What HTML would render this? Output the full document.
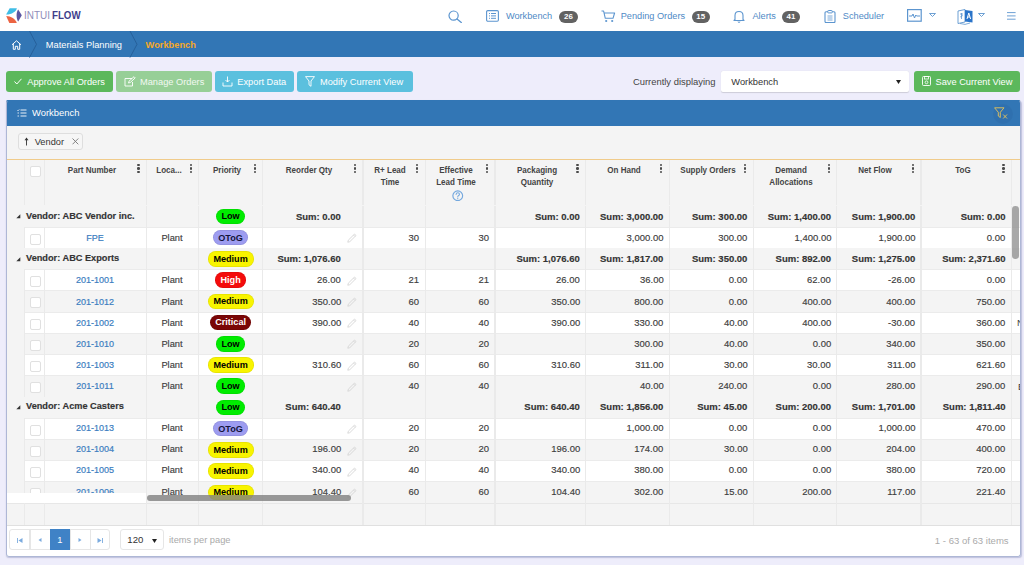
<!DOCTYPE html><html><head><meta charset="utf-8"><style>
*{margin:0;padding:0;box-sizing:border-box}
html,body{width:1024px;height:565px;overflow:hidden;background:#eeedfb;font-family:"Liberation Sans", sans-serif;color:#333}
.ab{position:absolute}
.t{position:absolute;white-space:nowrap;line-height:1}
.btn{position:absolute;border-radius:3px}
.badge{position:absolute;background:#626262;border-radius:6.5px;height:12.8px}
.cl{position:absolute;width:1.4px;background:#eaeaea}
.pill{position:absolute;height:15.6px;border-radius:7.8px;box-shadow:inset 0 0 0 0.7px rgba(0,0,0,0.08)}
.cb{position:absolute;width:11px;height:11px;border:1px solid #e0e0e0;border-radius:2px;background:#fff}
.keb{position:absolute;width:2.4px;}
.keb i{position:absolute;left:0;width:2.4px;height:2.4px;border-radius:50%;background:#4a4a4a}
</style></head><body>

<div class="ab" style="left:0;top:0;width:1024px;height:31px;background:#fff"></div>
<svg class="ab" style="left:0;top:0" width="30" height="31" viewBox="0 0 30 31">
<path d="M6.1 14.6 L9.7 8.2 L16.9 8.2 C16 11.6 12 14.3 6.1 14.6 Z" fill="#3fbde6"/>
<path d="M6.2 16.0 C11 16.2 15.5 19 16.8 22.9 L9.3 22.9 Z" fill="#ec6443"/>
<path d="M18.2 9.4 L21.8 15.3 L18.2 21.5 C16.2 19 15.9 12 18.2 9.4 Z" fill="#5a56a2"/>
</svg>
<div class="t" style="top:10.48px;font-size:11.3px;color:#8f8db9;left:24.10px;transform:scaleX(0.88);transform-origin:0 0;">INTUI</div>
<div class="t" style="top:10.48px;font-size:11.3px;color:#403e8c;font-weight:bold;left:52.10px;transform:scaleX(0.86);transform-origin:0 0;">FLOW</div>
<svg class="ab" style="left:448px;top:9.5px" width="15" height="13" viewBox="0 0 15 13"><circle cx="5.6" cy="5.6" r="4.6" fill="none" stroke="#5c95cf" stroke-width="1.2"/><path d="M9 9 L13.3 12.5" stroke="#5c95cf" stroke-width="1.3" stroke-linecap="round"/></svg>
<svg class="ab" style="left:486px;top:10.3px" width="13" height="12" viewBox="0 0 13 12"><rect x="0.6" y="0.6" width="11.8" height="10.6" rx="1.2" fill="none" stroke="#5c95cf" stroke-width="1.1"/><path d="M3 3.5h1M3 5.9h1M3 8.3h1M5 3.5h5M5 5.9h5M5 8.3h5" stroke="#5c95cf" stroke-width="1"/></svg>
<div class="t" style="top:12.01px;font-size:9.2px;color:#4f8ac6;left:505.90px;">Workbench</div>
<div class="badge" style="left:558.6px;top:10.5px;width:19.600000000000023px"></div>
<div class="t" style="top:13.04px;font-size:7.9px;color:#fff;font-weight:bold;left:418.40px;width:300px;text-align:center;">26</div>
<svg class="ab" style="left:601px;top:9.5px" width="15" height="13" viewBox="0 0 15 13"><path d="M0.5 1 H2.6 L4.3 8.3 H12 L13.6 3 H3.2" fill="none" stroke="#5c95cf" stroke-width="1.1" stroke-linejoin="round"/><circle cx="5.2" cy="11" r="1.1" fill="#5c95cf"/><circle cx="11.2" cy="11" r="1.1" fill="#5c95cf"/></svg>
<div class="t" style="top:12.01px;font-size:9.2px;color:#4f8ac6;left:620.70px;">Pending Orders</div>
<div class="badge" style="left:691.5px;top:10.5px;width:18.5px"></div>
<div class="t" style="top:13.04px;font-size:7.9px;color:#fff;font-weight:bold;left:550.75px;width:300px;text-align:center;">15</div>
<svg class="ab" style="left:733px;top:9.5px" width="12" height="13" viewBox="0 0 12 13"><path d="M2 9.5 V5.5 Q2 1.5 6 1.5 Q10 1.5 10 5.5 V9.5 L11 10.5 H1 Z" fill="none" stroke="#5c95cf" stroke-width="1.1" stroke-linejoin="round"/><path d="M4.8 11.8 Q6 13 7.2 11.8" fill="none" stroke="#5c95cf" stroke-width="1"/></svg>
<div class="t" style="top:12.01px;font-size:9.2px;color:#4f8ac6;left:752.40px;">Alerts</div>
<div class="badge" style="left:781.8px;top:10.5px;width:18.40000000000009px"></div>
<div class="t" style="top:13.04px;font-size:7.9px;color:#fff;font-weight:bold;left:641.00px;width:300px;text-align:center;">41</div>
<svg class="ab" style="left:824px;top:9.5px" width="12" height="13" viewBox="0 0 12 13"><rect x="1" y="1.8" width="10" height="10.8" rx="1" fill="none" stroke="#5c95cf" stroke-width="1.1"/><rect x="3.8" y="0.5" width="4.4" height="2.4" rx="0.6" fill="#fff" stroke="#5c95cf" stroke-width="1"/><path d="M3.5 6h5M3.5 8h5M3.5 10h5" stroke="#5c95cf" stroke-width="0.8"/></svg>
<div class="t" style="top:12.01px;font-size:9.2px;color:#4f8ac6;left:842.80px;">Scheduler</div>
<svg class="ab" style="left:907px;top:9.1px" width="15" height="13" viewBox="0 0 15 13"><rect x="0.6" y="0.6" width="13.6" height="11.6" fill="none" stroke="#5c95cf" stroke-width="1.2"/><path d="M2 7 H5 L6 5 L7.5 9 L8.8 6 L9.6 7 H13" fill="none" stroke="#5c95cf" stroke-width="1"/></svg>
<svg class="ab" style="left:928.8px;top:13.4px" width="7" height="4" viewBox="0 0 7 4"><path d="M0.5 0.5 H6.5 L3.5 3.5 Z" fill="none" stroke="#5c95cf" stroke-width="0.9"/></svg>
<svg class="ab" style="left:957px;top:7.5px" width="17" height="17" viewBox="0 0 17 17"><path d="M1 3 L8 1.5 V14 L1 15.5 Z" fill="#fff" stroke="#5c95cf" stroke-width="0.9"/><path d="M8 2 L15.5 3 V14.5 L8 13.5 Z" fill="#2a74c9"/><path d="M10 11 L11.8 5 L13.6 11 M10.7 9 H12.9" fill="none" stroke="#fff" stroke-width="1"/><path d="M3 6 H6 M4.5 5 V11 M3.2 9 L5.8 7.5" stroke="#5c95cf" stroke-width="0.8" fill="none"/><path d="M3 15.5 Q8 17.5 13 15" fill="none" stroke="#5c95cf" stroke-width="0.8"/></svg>
<svg class="ab" style="left:978.3px;top:13.4px" width="7" height="4" viewBox="0 0 7 4"><path d="M0.5 0.5 H6.5 L3.5 3.5 Z" fill="none" stroke="#5c95cf" stroke-width="0.9"/></svg>
<svg class="ab" style="left:1006.8px;top:11.7px" width="9" height="8" viewBox="0 0 9 8"><path d="M0 0.6h8.6M0 3.9h8.6M0 7.2h8.6" stroke="#5c95cf" stroke-width="0.9"/></svg>
<div class="ab" style="left:0;top:31px;width:1024px;height:26.3px;background:#3276b5"></div>
<svg class="ab" style="left:11px;top:40px" width="11" height="10" viewBox="0 0 11 10"><path d="M1 4.8 L5.5 0.8 L10 4.8 M2.3 3.8 V9.3 H4.3 V6.3 H6.7 V9.3 H8.7 V3.8" fill="none" stroke="#fff" stroke-width="1" stroke-linejoin="round"/></svg>
<svg class="ab" style="left:28px;top:31px" width="120" height="27" viewBox="0 0 120 27"><path d="M1.5 0 L8.5 13.3 L1.5 26.5" fill="none" stroke="#26609a" stroke-width="1"/><path d="M102 0 L109 13.3 L102 26.5" fill="none" stroke="#26609a" stroke-width="1"/></svg>
<div class="t" style="top:40.97px;font-size:9.27px;color:#fff;left:45.80px;">Materials Planning</div>
<div class="t" style="top:40.97px;font-size:9.27px;color:#f5a828;font-weight:bold;left:145.60px;">Workbench</div>
<div class="btn" style="left:5.8px;top:70.8px;width:107.60px;height:21.5px;background:#5cb85c"><svg class="ab" style="left:8px;top:7px" width="8" height="7" viewBox="0 0 8 7"><path d="M0.5 3.5 L2.8 6 L7.5 0.8" fill="none" stroke="#fff" stroke-width="1"/></svg></div>
<div class="t" style="top:77.68px;font-size:9.25px;color:#fff;left:27.30px;">Approve All Orders</div>
<div class="btn" style="left:116.4px;top:70.8px;width:95.80px;height:21.5px;background:#97cf97"><svg class="ab" style="left:7.5px;top:5px" width="12" height="11" viewBox="0 0 12 11"><path d="M8 2.5 H1 V10 H8.5 V6" fill="none" stroke="#fff" stroke-width="0.9"/><path d="M4.5 7 L5 5.2 L10 0.7 L11.2 1.9 L6.3 6.5 Z" fill="none" stroke="#fff" stroke-width="0.9"/></svg></div>
<div class="t" style="top:77.68px;font-size:9.25px;color:#f2f8f2;left:140.00px;">Manage Orders</div>
<div class="btn" style="left:215.4px;top:70.8px;width:78.80px;height:21.5px;background:#5bc0de"><svg class="ab" style="left:7px;top:5px" width="11" height="11" viewBox="0 0 11 11"><path d="M5.5 0.5 V6 M3.5 4 L5.5 6 L7.5 4" fill="none" stroke="#fff" stroke-width="0.9"/><path d="M1 6.5 V10 H10 V6.5" fill="none" stroke="#fff" stroke-width="0.9"/></svg></div>
<div class="t" style="top:77.68px;font-size:9.25px;color:#fff;left:237.30px;">Export Data</div>
<div class="btn" style="left:297.2px;top:70.8px;width:115.40px;height:21.5px;background:#5bc0de"><svg class="ab" style="left:8px;top:5.3px" width="10" height="11" viewBox="0 0 10 11"><path d="M0.5 0.6 H9.5 L6 5 V10.3 L4 8.8 V5 Z" fill="none" stroke="#fff" stroke-width="0.9" stroke-linejoin="round"/></svg></div>
<div class="t" style="top:77.68px;font-size:9.25px;color:#fff;left:320.00px;">Modify Current View</div>
<div class="t" style="top:77.40px;font-size:9.42px;color:#444;left:632.90px;">Currently displaying</div>
<div class="ab" style="left:721px;top:71px;width:187.6px;height:21.3px;background:#fff;border-radius:2px;box-shadow:0 0.6px 1px rgba(0,0,0,0.14)"></div>
<div class="t" style="top:78.26px;font-size:9.3px;color:#333;left:731.30px;">Workbench</div>
<svg class="ab" style="left:895.7px;top:80px" width="5" height="4" viewBox="0 0 5 4"><path d="M0 0 H5 L2.5 4 Z" fill="#222"/></svg>
<div class="btn" style="left:914.2px;top:70.8px;width:106.00px;height:21.5px;background:#5cb85c"><svg class="ab" style="left:8px;top:5.5px" width="9" height="10" viewBox="0 0 9 10"><rect x="0.5" y="0.5" width="8" height="9" rx="1" fill="none" stroke="#fff" stroke-width="0.9"/><rect x="2.5" y="0.5" width="4" height="2.5" fill="none" stroke="#fff" stroke-width="0.8"/><circle cx="4.5" cy="6.3" r="1.4" fill="none" stroke="#fff" stroke-width="0.8"/></svg></div>
<div class="t" style="top:77.68px;font-size:9.25px;color:#fff;left:935.50px;">Save Current View</div>
<div class="ab" style="left:6px;top:99.8px;width:1014.3px;height:26.2px;background:#3276b5;border-radius:2px 2px 0 0"></div>
<svg class="ab" style="left:16.9px;top:108.5px" width="10" height="8" viewBox="0 0 10 8"><path d="M3.5 1h6M3.5 4h6M3.5 7h6" stroke="#fff" stroke-width="0.9"/><path d="M0.3 1.2 L1 1.9 L2.3 0.4" fill="none" stroke="#fff" stroke-width="0.7"/><path d="M0.5 4h1.5M0.5 7h1.5" stroke="#fff" stroke-width="0.8"/></svg>
<div class="t" style="top:107.86px;font-size:9.7px;color:#fff;left:32.30px;transform:scaleX(0.97);transform-origin:0 0;">Workbench</div>
<div class="ab" style="left:992.5px;top:104px;width:20px;height:20px;border-radius:50%;background:rgba(0,0,40,0.045)"></div>
<svg class="ab" style="left:994px;top:106.5px" width="15" height="13" viewBox="0 0 15 13"><path d="M0.6 0.8 H10 L6.3 5.3 V10.5 L4.3 9 V5.3 Z" fill="none" stroke="#e8c55a" stroke-width="0.9" stroke-linejoin="round"/><path d="M9.2 7.5 L13 11.5 M13 7.5 L9.2 11.5" stroke="#e8c55a" stroke-width="0.9"/></svg>
<div class="ab" style="left:6px;top:126px;width:1014.3px;height:33px;background:#f4f4f4"></div>
<div class="ab" style="left:17.5px;top:133.3px;width:65.6px;height:17.2px;border:1px solid #dedede;border-radius:3px;background:#f6f6f6"></div>
<svg class="ab" style="left:24px;top:137.3px" width="5" height="9" viewBox="0 0 5 9"><path d="M2.5 8.5 V1.5" stroke="#333" stroke-width="0.9"/><path d="M0.5 3.2 L2.5 0.5 L4.5 3.2 Z" fill="#333"/></svg>
<div class="t" style="top:137.98px;font-size:9.25px;color:#333;left:34.70px;">Vendor</div>
<svg class="ab" style="left:71.5px;top:137.7px" width="7" height="7" viewBox="0 0 7 7"><path d="M0.5 0.5 L6.3 6.3 M6.3 0.5 L0.5 6.3" stroke="#777" stroke-width="0.9"/></svg>
<div class="ab" style="left:6px;top:158.6px;width:1014.3px;height:1px;background:#f0cb8a"></div>
<div class="ab" style="left:6px;top:159.6px;width:1014.3px;height:365.6px;background:#f4f4f4"></div>
<div class="ab" style="left:6px;top:205.50px;width:1014.3px;height:21.23px;background:#f4f4f4"></div>
<svg class="ab" style="left:16.2px;top:214.10px" width="5" height="5" viewBox="0 0 5 5"><path d="M4.3 0.3 V4.3 H0.3 Z" fill="#333"/></svg>
<div class="t" style="top:212.16px;font-size:9.3px;color:#333;font-weight:bold;left:26.40px;transform:scaleX(0.99);transform-origin:0 0;-webkit-text-stroke:0.15px #333;">Vendor: ABC Vendor inc.</div>
<div class="pill" style="left:216.45px;top:208.60px;width:28.3px;background:#00ec00"></div>
<div class="t" style="top:212.30px;font-size:9.1px;color:#000;font-weight:bold;left:80.60px;width:300px;text-align:center;">Low</div>
<div class="t" style="top:211.96px;font-size:9.5px;color:#333;font-weight:bold;right:683.20px;text-align:right;-webkit-text-stroke:0.15px #333;">Sum: 0.00</div>
<div class="t" style="top:211.96px;font-size:9.5px;color:#333;font-weight:bold;right:444.20px;text-align:right;-webkit-text-stroke:0.15px #333;">Sum: 0.00</div>
<div class="t" style="top:211.96px;font-size:9.5px;color:#333;font-weight:bold;right:360.60px;text-align:right;-webkit-text-stroke:0.15px #333;">Sum: 3,000.00</div>
<div class="t" style="top:211.96px;font-size:9.5px;color:#333;font-weight:bold;right:276.60px;text-align:right;-webkit-text-stroke:0.15px #333;">Sum: 300.00</div>
<div class="t" style="top:211.96px;font-size:9.5px;color:#333;font-weight:bold;right:193.00px;text-align:right;-webkit-text-stroke:0.15px #333;">Sum: 1,400.00</div>
<div class="t" style="top:211.96px;font-size:9.5px;color:#333;font-weight:bold;right:108.80px;text-align:right;-webkit-text-stroke:0.15px #333;">Sum: 1,900.00</div>
<div class="t" style="top:211.96px;font-size:9.5px;color:#333;font-weight:bold;right:18.40px;text-align:right;-webkit-text-stroke:0.15px #333;">Sum: 0.00</div>
<div class="ab" style="left:24px;top:226.73px;width:996.3px;height:21.23px;background:#fff;border-top:1px solid #ebebeb"></div>
<div class="cb" style="left:29.6px;top:233.73px"></div>
<div class="t" style="top:233.27px;font-size:9.9px;color:#3a7cc0;left:-54.55px;width:300px;text-align:center;transform:scaleX(0.91);transform-origin:50% 0;-webkit-text-stroke:0.2px #3a7cc0;">FPE</div>
<div class="t" style="top:233.27px;font-size:9.9px;color:#404040;left:22.45px;width:300px;text-align:center;transform:scaleX(0.94);transform-origin:50% 0;-webkit-text-stroke:0.15px #3a3a3a;">Plant</div>
<svg class="ab" style="left:347px;top:233.33px" width="10" height="10" viewBox="0 0 10 10"><path d="M0.8 9.2 L1.3 7.2 L7.5 1 L9 2.5 L2.8 8.7 Z M6.5 2 L8 3.5" fill="none" stroke="#d0d0d0" stroke-width="0.8"/></svg>
<div class="pill" style="left:213.40px;top:229.83px;width:34.4px;background:#9d9cf0"></div>
<div class="t" style="top:233.53px;font-size:9.1px;color:#14143a;font-weight:bold;left:80.60px;width:300px;text-align:center;">OToG</div>
<div class="t" style="top:233.27px;font-size:9.9px;color:#404040;right:604.60px;text-align:right;transform:scaleX(0.96);transform-origin:100% 0;-webkit-text-stroke:0.15px #3a3a3a;">30</div>
<div class="t" style="top:233.27px;font-size:9.9px;color:#404040;right:534.90px;text-align:right;transform:scaleX(0.96);transform-origin:100% 0;-webkit-text-stroke:0.15px #3a3a3a;">30</div>
<div class="t" style="top:233.27px;font-size:9.9px;color:#404040;right:360.60px;text-align:right;transform:scaleX(0.96);transform-origin:100% 0;-webkit-text-stroke:0.15px #3a3a3a;">3,000.00</div>
<div class="t" style="top:233.27px;font-size:9.9px;color:#404040;right:276.60px;text-align:right;transform:scaleX(0.96);transform-origin:100% 0;-webkit-text-stroke:0.15px #3a3a3a;">300.00</div>
<div class="t" style="top:233.27px;font-size:9.9px;color:#404040;right:193.00px;text-align:right;transform:scaleX(0.96);transform-origin:100% 0;-webkit-text-stroke:0.15px #3a3a3a;">1,400.00</div>
<div class="t" style="top:233.27px;font-size:9.9px;color:#404040;right:108.80px;text-align:right;transform:scaleX(0.96);transform-origin:100% 0;-webkit-text-stroke:0.15px #3a3a3a;">1,900.00</div>
<div class="t" style="top:233.27px;font-size:9.9px;color:#404040;right:18.40px;text-align:right;transform:scaleX(0.96);transform-origin:100% 0;-webkit-text-stroke:0.15px #3a3a3a;">0.00</div>
<div class="ab" style="left:6px;top:247.96px;width:1014.3px;height:21.23px;background:#f4f4f4"></div>
<svg class="ab" style="left:16.2px;top:256.56px" width="5" height="5" viewBox="0 0 5 5"><path d="M4.3 0.3 V4.3 H0.3 Z" fill="#333"/></svg>
<div class="t" style="top:254.38px;font-size:9.3px;color:#333;font-weight:bold;left:26.40px;transform:scaleX(0.99);transform-origin:0 0;-webkit-text-stroke:0.15px #333;">Vendor: ABC Exports</div>
<div class="pill" style="left:207.60px;top:251.06px;width:46px;background:#f8f400"></div>
<div class="t" style="top:254.76px;font-size:9.1px;color:#000;font-weight:bold;left:80.60px;width:300px;text-align:center;">Medium</div>
<div class="t" style="top:254.18px;font-size:9.5px;color:#333;font-weight:bold;right:683.20px;text-align:right;-webkit-text-stroke:0.15px #333;">Sum: 1,076.60</div>
<div class="t" style="top:254.18px;font-size:9.5px;color:#333;font-weight:bold;right:444.20px;text-align:right;-webkit-text-stroke:0.15px #333;">Sum: 1,076.60</div>
<div class="t" style="top:254.18px;font-size:9.5px;color:#333;font-weight:bold;right:360.60px;text-align:right;-webkit-text-stroke:0.15px #333;">Sum: 1,817.00</div>
<div class="t" style="top:254.18px;font-size:9.5px;color:#333;font-weight:bold;right:276.60px;text-align:right;-webkit-text-stroke:0.15px #333;">Sum: 350.00</div>
<div class="t" style="top:254.18px;font-size:9.5px;color:#333;font-weight:bold;right:193.00px;text-align:right;-webkit-text-stroke:0.15px #333;">Sum: 892.00</div>
<div class="t" style="top:254.18px;font-size:9.5px;color:#333;font-weight:bold;right:108.80px;text-align:right;-webkit-text-stroke:0.15px #333;">Sum: 1,275.00</div>
<div class="t" style="top:254.18px;font-size:9.5px;color:#333;font-weight:bold;right:18.40px;text-align:right;-webkit-text-stroke:0.15px #333;">Sum: 2,371.60</div>
<div class="ab" style="left:24px;top:269.19px;width:996.3px;height:21.23px;background:#fff;border-top:1px solid #ebebeb"></div>
<div class="cb" style="left:29.6px;top:276.19px"></div>
<div class="t" style="top:275.49px;font-size:9.9px;color:#3a7cc0;left:-54.55px;width:300px;text-align:center;transform:scaleX(0.91);transform-origin:50% 0;-webkit-text-stroke:0.2px #3a7cc0;">201-1001</div>
<div class="t" style="top:275.49px;font-size:9.9px;color:#404040;left:22.45px;width:300px;text-align:center;transform:scaleX(0.94);transform-origin:50% 0;-webkit-text-stroke:0.15px #3a3a3a;">Plant</div>
<svg class="ab" style="left:347px;top:275.79px" width="10" height="10" viewBox="0 0 10 10"><path d="M0.8 9.2 L1.3 7.2 L7.5 1 L9 2.5 L2.8 8.7 Z M6.5 2 L8 3.5" fill="none" stroke="#d0d0d0" stroke-width="0.8"/></svg>
<div class="pill" style="left:215.45px;top:272.29px;width:30.3px;background:#f40c0c"></div>
<div class="t" style="top:275.99px;font-size:9.1px;color:#fff;font-weight:bold;left:80.60px;width:300px;text-align:center;">High</div>
<div class="t" style="top:275.49px;font-size:9.9px;color:#404040;right:683.20px;text-align:right;transform:scaleX(0.96);transform-origin:100% 0;-webkit-text-stroke:0.15px #3a3a3a;">26.00</div>
<div class="t" style="top:275.49px;font-size:9.9px;color:#404040;right:604.60px;text-align:right;transform:scaleX(0.96);transform-origin:100% 0;-webkit-text-stroke:0.15px #3a3a3a;">21</div>
<div class="t" style="top:275.49px;font-size:9.9px;color:#404040;right:534.90px;text-align:right;transform:scaleX(0.96);transform-origin:100% 0;-webkit-text-stroke:0.15px #3a3a3a;">21</div>
<div class="t" style="top:275.49px;font-size:9.9px;color:#404040;right:444.20px;text-align:right;transform:scaleX(0.96);transform-origin:100% 0;-webkit-text-stroke:0.15px #3a3a3a;">26.00</div>
<div class="t" style="top:275.49px;font-size:9.9px;color:#404040;right:360.60px;text-align:right;transform:scaleX(0.96);transform-origin:100% 0;-webkit-text-stroke:0.15px #3a3a3a;">36.00</div>
<div class="t" style="top:275.49px;font-size:9.9px;color:#404040;right:276.60px;text-align:right;transform:scaleX(0.96);transform-origin:100% 0;-webkit-text-stroke:0.15px #3a3a3a;">0.00</div>
<div class="t" style="top:275.49px;font-size:9.9px;color:#404040;right:193.00px;text-align:right;transform:scaleX(0.96);transform-origin:100% 0;-webkit-text-stroke:0.15px #3a3a3a;">62.00</div>
<div class="t" style="top:275.49px;font-size:9.9px;color:#404040;right:108.80px;text-align:right;transform:scaleX(0.96);transform-origin:100% 0;-webkit-text-stroke:0.15px #3a3a3a;">-26.00</div>
<div class="t" style="top:275.49px;font-size:9.9px;color:#404040;right:18.40px;text-align:right;transform:scaleX(0.96);transform-origin:100% 0;-webkit-text-stroke:0.15px #3a3a3a;">0.00</div>
<div class="ab" style="left:24px;top:290.42px;width:996.3px;height:21.23px;background:#f4f4f4;border-top:1px solid #ebebeb"></div>
<div class="cb" style="left:29.6px;top:297.42px"></div>
<div class="t" style="top:296.60px;font-size:9.9px;color:#3a7cc0;left:-54.55px;width:300px;text-align:center;transform:scaleX(0.91);transform-origin:50% 0;-webkit-text-stroke:0.2px #3a7cc0;">201-1012</div>
<div class="t" style="top:296.60px;font-size:9.9px;color:#404040;left:22.45px;width:300px;text-align:center;transform:scaleX(0.94);transform-origin:50% 0;-webkit-text-stroke:0.15px #3a3a3a;">Plant</div>
<svg class="ab" style="left:347px;top:297.02px" width="10" height="10" viewBox="0 0 10 10"><path d="M0.8 9.2 L1.3 7.2 L7.5 1 L9 2.5 L2.8 8.7 Z M6.5 2 L8 3.5" fill="none" stroke="#d0d0d0" stroke-width="0.8"/></svg>
<div class="pill" style="left:207.60px;top:293.52px;width:46px;background:#f8f400"></div>
<div class="t" style="top:297.22px;font-size:9.1px;color:#000;font-weight:bold;left:80.60px;width:300px;text-align:center;">Medium</div>
<div class="t" style="top:296.60px;font-size:9.9px;color:#404040;right:683.20px;text-align:right;transform:scaleX(0.96);transform-origin:100% 0;-webkit-text-stroke:0.15px #3a3a3a;">350.00</div>
<div class="t" style="top:296.60px;font-size:9.9px;color:#404040;right:604.60px;text-align:right;transform:scaleX(0.96);transform-origin:100% 0;-webkit-text-stroke:0.15px #3a3a3a;">60</div>
<div class="t" style="top:296.60px;font-size:9.9px;color:#404040;right:534.90px;text-align:right;transform:scaleX(0.96);transform-origin:100% 0;-webkit-text-stroke:0.15px #3a3a3a;">60</div>
<div class="t" style="top:296.60px;font-size:9.9px;color:#404040;right:444.20px;text-align:right;transform:scaleX(0.96);transform-origin:100% 0;-webkit-text-stroke:0.15px #3a3a3a;">350.00</div>
<div class="t" style="top:296.60px;font-size:9.9px;color:#404040;right:360.60px;text-align:right;transform:scaleX(0.96);transform-origin:100% 0;-webkit-text-stroke:0.15px #3a3a3a;">800.00</div>
<div class="t" style="top:296.60px;font-size:9.9px;color:#404040;right:276.60px;text-align:right;transform:scaleX(0.96);transform-origin:100% 0;-webkit-text-stroke:0.15px #3a3a3a;">0.00</div>
<div class="t" style="top:296.60px;font-size:9.9px;color:#404040;right:193.00px;text-align:right;transform:scaleX(0.96);transform-origin:100% 0;-webkit-text-stroke:0.15px #3a3a3a;">400.00</div>
<div class="t" style="top:296.60px;font-size:9.9px;color:#404040;right:108.80px;text-align:right;transform:scaleX(0.96);transform-origin:100% 0;-webkit-text-stroke:0.15px #3a3a3a;">400.00</div>
<div class="t" style="top:296.60px;font-size:9.9px;color:#404040;right:18.40px;text-align:right;transform:scaleX(0.96);transform-origin:100% 0;-webkit-text-stroke:0.15px #3a3a3a;">750.00</div>
<div class="ab" style="left:24px;top:311.65px;width:996.3px;height:21.23px;background:#fff;border-top:1px solid #ebebeb"></div>
<div class="cb" style="left:29.6px;top:318.65px"></div>
<div class="t" style="top:317.71px;font-size:9.9px;color:#3a7cc0;left:-54.55px;width:300px;text-align:center;transform:scaleX(0.91);transform-origin:50% 0;-webkit-text-stroke:0.2px #3a7cc0;">201-1002</div>
<div class="t" style="top:317.71px;font-size:9.9px;color:#404040;left:22.45px;width:300px;text-align:center;transform:scaleX(0.94);transform-origin:50% 0;-webkit-text-stroke:0.15px #3a3a3a;">Plant</div>
<svg class="ab" style="left:347px;top:318.25px" width="10" height="10" viewBox="0 0 10 10"><path d="M0.8 9.2 L1.3 7.2 L7.5 1 L9 2.5 L2.8 8.7 Z M6.5 2 L8 3.5" fill="none" stroke="#d0d0d0" stroke-width="0.8"/></svg>
<div class="pill" style="left:209.70px;top:314.75px;width:41.8px;background:#7a0606"></div>
<div class="t" style="top:318.45px;font-size:9.1px;color:#fff;font-weight:bold;left:80.60px;width:300px;text-align:center;">Critical</div>
<div class="t" style="top:317.71px;font-size:9.9px;color:#404040;right:683.20px;text-align:right;transform:scaleX(0.96);transform-origin:100% 0;-webkit-text-stroke:0.15px #3a3a3a;">390.00</div>
<div class="t" style="top:317.71px;font-size:9.9px;color:#404040;right:604.60px;text-align:right;transform:scaleX(0.96);transform-origin:100% 0;-webkit-text-stroke:0.15px #3a3a3a;">40</div>
<div class="t" style="top:317.71px;font-size:9.9px;color:#404040;right:534.90px;text-align:right;transform:scaleX(0.96);transform-origin:100% 0;-webkit-text-stroke:0.15px #3a3a3a;">40</div>
<div class="t" style="top:317.71px;font-size:9.9px;color:#404040;right:444.20px;text-align:right;transform:scaleX(0.96);transform-origin:100% 0;-webkit-text-stroke:0.15px #3a3a3a;">390.00</div>
<div class="t" style="top:317.71px;font-size:9.9px;color:#404040;right:360.60px;text-align:right;transform:scaleX(0.96);transform-origin:100% 0;-webkit-text-stroke:0.15px #3a3a3a;">330.00</div>
<div class="t" style="top:317.71px;font-size:9.9px;color:#404040;right:276.60px;text-align:right;transform:scaleX(0.96);transform-origin:100% 0;-webkit-text-stroke:0.15px #3a3a3a;">40.00</div>
<div class="t" style="top:317.71px;font-size:9.9px;color:#404040;right:193.00px;text-align:right;transform:scaleX(0.96);transform-origin:100% 0;-webkit-text-stroke:0.15px #3a3a3a;">400.00</div>
<div class="t" style="top:317.71px;font-size:9.9px;color:#404040;right:108.80px;text-align:right;transform:scaleX(0.96);transform-origin:100% 0;-webkit-text-stroke:0.15px #3a3a3a;">-30.00</div>
<div class="t" style="top:317.71px;font-size:9.9px;color:#404040;right:18.40px;text-align:right;transform:scaleX(0.96);transform-origin:100% 0;-webkit-text-stroke:0.15px #3a3a3a;">360.00</div>
<div class="ab" style="left:24px;top:332.88px;width:996.3px;height:21.23px;background:#f4f4f4;border-top:1px solid #ebebeb"></div>
<div class="cb" style="left:29.6px;top:339.88px"></div>
<div class="t" style="top:338.82px;font-size:9.9px;color:#3a7cc0;left:-54.55px;width:300px;text-align:center;transform:scaleX(0.91);transform-origin:50% 0;-webkit-text-stroke:0.2px #3a7cc0;">201-1010</div>
<div class="t" style="top:338.82px;font-size:9.9px;color:#404040;left:22.45px;width:300px;text-align:center;transform:scaleX(0.94);transform-origin:50% 0;-webkit-text-stroke:0.15px #3a3a3a;">Plant</div>
<svg class="ab" style="left:347px;top:339.48px" width="10" height="10" viewBox="0 0 10 10"><path d="M0.8 9.2 L1.3 7.2 L7.5 1 L9 2.5 L2.8 8.7 Z M6.5 2 L8 3.5" fill="none" stroke="#d0d0d0" stroke-width="0.8"/></svg>
<div class="pill" style="left:216.45px;top:335.98px;width:28.3px;background:#00ec00"></div>
<div class="t" style="top:339.68px;font-size:9.1px;color:#000;font-weight:bold;left:80.60px;width:300px;text-align:center;">Low</div>
<div class="t" style="top:338.82px;font-size:9.9px;color:#404040;right:604.60px;text-align:right;transform:scaleX(0.96);transform-origin:100% 0;-webkit-text-stroke:0.15px #3a3a3a;">20</div>
<div class="t" style="top:338.82px;font-size:9.9px;color:#404040;right:534.90px;text-align:right;transform:scaleX(0.96);transform-origin:100% 0;-webkit-text-stroke:0.15px #3a3a3a;">20</div>
<div class="t" style="top:338.82px;font-size:9.9px;color:#404040;right:360.60px;text-align:right;transform:scaleX(0.96);transform-origin:100% 0;-webkit-text-stroke:0.15px #3a3a3a;">300.00</div>
<div class="t" style="top:338.82px;font-size:9.9px;color:#404040;right:276.60px;text-align:right;transform:scaleX(0.96);transform-origin:100% 0;-webkit-text-stroke:0.15px #3a3a3a;">40.00</div>
<div class="t" style="top:338.82px;font-size:9.9px;color:#404040;right:193.00px;text-align:right;transform:scaleX(0.96);transform-origin:100% 0;-webkit-text-stroke:0.15px #3a3a3a;">0.00</div>
<div class="t" style="top:338.82px;font-size:9.9px;color:#404040;right:108.80px;text-align:right;transform:scaleX(0.96);transform-origin:100% 0;-webkit-text-stroke:0.15px #3a3a3a;">340.00</div>
<div class="t" style="top:338.82px;font-size:9.9px;color:#404040;right:18.40px;text-align:right;transform:scaleX(0.96);transform-origin:100% 0;-webkit-text-stroke:0.15px #3a3a3a;">350.00</div>
<div class="ab" style="left:24px;top:354.11px;width:996.3px;height:21.23px;background:#fff;border-top:1px solid #ebebeb"></div>
<div class="cb" style="left:29.6px;top:361.11px"></div>
<div class="t" style="top:359.93px;font-size:9.9px;color:#3a7cc0;left:-54.55px;width:300px;text-align:center;transform:scaleX(0.91);transform-origin:50% 0;-webkit-text-stroke:0.2px #3a7cc0;">201-1003</div>
<div class="t" style="top:359.93px;font-size:9.9px;color:#404040;left:22.45px;width:300px;text-align:center;transform:scaleX(0.94);transform-origin:50% 0;-webkit-text-stroke:0.15px #3a3a3a;">Plant</div>
<svg class="ab" style="left:347px;top:360.71px" width="10" height="10" viewBox="0 0 10 10"><path d="M0.8 9.2 L1.3 7.2 L7.5 1 L9 2.5 L2.8 8.7 Z M6.5 2 L8 3.5" fill="none" stroke="#d0d0d0" stroke-width="0.8"/></svg>
<div class="pill" style="left:207.60px;top:357.21px;width:46px;background:#f8f400"></div>
<div class="t" style="top:360.91px;font-size:9.1px;color:#000;font-weight:bold;left:80.60px;width:300px;text-align:center;">Medium</div>
<div class="t" style="top:359.93px;font-size:9.9px;color:#404040;right:683.20px;text-align:right;transform:scaleX(0.96);transform-origin:100% 0;-webkit-text-stroke:0.15px #3a3a3a;">310.60</div>
<div class="t" style="top:359.93px;font-size:9.9px;color:#404040;right:604.60px;text-align:right;transform:scaleX(0.96);transform-origin:100% 0;-webkit-text-stroke:0.15px #3a3a3a;">60</div>
<div class="t" style="top:359.93px;font-size:9.9px;color:#404040;right:534.90px;text-align:right;transform:scaleX(0.96);transform-origin:100% 0;-webkit-text-stroke:0.15px #3a3a3a;">60</div>
<div class="t" style="top:359.93px;font-size:9.9px;color:#404040;right:444.20px;text-align:right;transform:scaleX(0.96);transform-origin:100% 0;-webkit-text-stroke:0.15px #3a3a3a;">310.60</div>
<div class="t" style="top:359.93px;font-size:9.9px;color:#404040;right:360.60px;text-align:right;transform:scaleX(0.96);transform-origin:100% 0;-webkit-text-stroke:0.15px #3a3a3a;">311.00</div>
<div class="t" style="top:359.93px;font-size:9.9px;color:#404040;right:276.60px;text-align:right;transform:scaleX(0.96);transform-origin:100% 0;-webkit-text-stroke:0.15px #3a3a3a;">30.00</div>
<div class="t" style="top:359.93px;font-size:9.9px;color:#404040;right:193.00px;text-align:right;transform:scaleX(0.96);transform-origin:100% 0;-webkit-text-stroke:0.15px #3a3a3a;">30.00</div>
<div class="t" style="top:359.93px;font-size:9.9px;color:#404040;right:108.80px;text-align:right;transform:scaleX(0.96);transform-origin:100% 0;-webkit-text-stroke:0.15px #3a3a3a;">311.00</div>
<div class="t" style="top:359.93px;font-size:9.9px;color:#404040;right:18.40px;text-align:right;transform:scaleX(0.96);transform-origin:100% 0;-webkit-text-stroke:0.15px #3a3a3a;">621.60</div>
<div class="ab" style="left:24px;top:375.34px;width:996.3px;height:21.23px;background:#f4f4f4;border-top:1px solid #ebebeb"></div>
<div class="cb" style="left:29.6px;top:382.34px"></div>
<div class="t" style="top:381.04px;font-size:9.9px;color:#3a7cc0;left:-54.55px;width:300px;text-align:center;transform:scaleX(0.91);transform-origin:50% 0;-webkit-text-stroke:0.2px #3a7cc0;">201-1011</div>
<div class="t" style="top:381.04px;font-size:9.9px;color:#404040;left:22.45px;width:300px;text-align:center;transform:scaleX(0.94);transform-origin:50% 0;-webkit-text-stroke:0.15px #3a3a3a;">Plant</div>
<svg class="ab" style="left:347px;top:381.94px" width="10" height="10" viewBox="0 0 10 10"><path d="M0.8 9.2 L1.3 7.2 L7.5 1 L9 2.5 L2.8 8.7 Z M6.5 2 L8 3.5" fill="none" stroke="#d0d0d0" stroke-width="0.8"/></svg>
<div class="pill" style="left:216.45px;top:378.44px;width:28.3px;background:#00ec00"></div>
<div class="t" style="top:382.14px;font-size:9.1px;color:#000;font-weight:bold;left:80.60px;width:300px;text-align:center;">Low</div>
<div class="t" style="top:381.04px;font-size:9.9px;color:#404040;right:604.60px;text-align:right;transform:scaleX(0.96);transform-origin:100% 0;-webkit-text-stroke:0.15px #3a3a3a;">40</div>
<div class="t" style="top:381.04px;font-size:9.9px;color:#404040;right:534.90px;text-align:right;transform:scaleX(0.96);transform-origin:100% 0;-webkit-text-stroke:0.15px #3a3a3a;">40</div>
<div class="t" style="top:381.04px;font-size:9.9px;color:#404040;right:360.60px;text-align:right;transform:scaleX(0.96);transform-origin:100% 0;-webkit-text-stroke:0.15px #3a3a3a;">40.00</div>
<div class="t" style="top:381.04px;font-size:9.9px;color:#404040;right:276.60px;text-align:right;transform:scaleX(0.96);transform-origin:100% 0;-webkit-text-stroke:0.15px #3a3a3a;">240.00</div>
<div class="t" style="top:381.04px;font-size:9.9px;color:#404040;right:193.00px;text-align:right;transform:scaleX(0.96);transform-origin:100% 0;-webkit-text-stroke:0.15px #3a3a3a;">0.00</div>
<div class="t" style="top:381.04px;font-size:9.9px;color:#404040;right:108.80px;text-align:right;transform:scaleX(0.96);transform-origin:100% 0;-webkit-text-stroke:0.15px #3a3a3a;">280.00</div>
<div class="t" style="top:381.04px;font-size:9.9px;color:#404040;right:18.40px;text-align:right;transform:scaleX(0.96);transform-origin:100% 0;-webkit-text-stroke:0.15px #3a3a3a;">290.00</div>
<div class="ab" style="left:6px;top:396.57px;width:1014.3px;height:21.23px;background:#f4f4f4"></div>
<svg class="ab" style="left:16.2px;top:405.17px" width="5" height="5" viewBox="0 0 5 5"><path d="M4.3 0.3 V4.3 H0.3 Z" fill="#333"/></svg>
<div class="t" style="top:402.15px;font-size:9.3px;color:#333;font-weight:bold;left:26.40px;transform:scaleX(0.99);transform-origin:0 0;-webkit-text-stroke:0.15px #333;">Vendor: Acme Casters</div>
<div class="pill" style="left:216.45px;top:399.67px;width:28.3px;background:#00ec00"></div>
<div class="t" style="top:403.37px;font-size:9.1px;color:#000;font-weight:bold;left:80.60px;width:300px;text-align:center;">Low</div>
<div class="t" style="top:401.95px;font-size:9.5px;color:#333;font-weight:bold;right:683.20px;text-align:right;-webkit-text-stroke:0.15px #333;">Sum: 640.40</div>
<div class="t" style="top:401.95px;font-size:9.5px;color:#333;font-weight:bold;right:444.20px;text-align:right;-webkit-text-stroke:0.15px #333;">Sum: 640.40</div>
<div class="t" style="top:401.95px;font-size:9.5px;color:#333;font-weight:bold;right:360.60px;text-align:right;-webkit-text-stroke:0.15px #333;">Sum: 1,856.00</div>
<div class="t" style="top:401.95px;font-size:9.5px;color:#333;font-weight:bold;right:276.60px;text-align:right;-webkit-text-stroke:0.15px #333;">Sum: 45.00</div>
<div class="t" style="top:401.95px;font-size:9.5px;color:#333;font-weight:bold;right:193.00px;text-align:right;-webkit-text-stroke:0.15px #333;">Sum: 200.00</div>
<div class="t" style="top:401.95px;font-size:9.5px;color:#333;font-weight:bold;right:108.80px;text-align:right;-webkit-text-stroke:0.15px #333;">Sum: 1,701.00</div>
<div class="t" style="top:401.95px;font-size:9.5px;color:#333;font-weight:bold;right:18.40px;text-align:right;-webkit-text-stroke:0.15px #333;">Sum: 1,811.40</div>
<div class="ab" style="left:24px;top:417.80px;width:996.3px;height:21.23px;background:#fff;border-top:1px solid #ebebeb"></div>
<div class="cb" style="left:29.6px;top:424.80px"></div>
<div class="t" style="top:423.26px;font-size:9.9px;color:#3a7cc0;left:-54.55px;width:300px;text-align:center;transform:scaleX(0.91);transform-origin:50% 0;-webkit-text-stroke:0.2px #3a7cc0;">201-1013</div>
<div class="t" style="top:423.26px;font-size:9.9px;color:#404040;left:22.45px;width:300px;text-align:center;transform:scaleX(0.94);transform-origin:50% 0;-webkit-text-stroke:0.15px #3a3a3a;">Plant</div>
<svg class="ab" style="left:347px;top:424.40px" width="10" height="10" viewBox="0 0 10 10"><path d="M0.8 9.2 L1.3 7.2 L7.5 1 L9 2.5 L2.8 8.7 Z M6.5 2 L8 3.5" fill="none" stroke="#d0d0d0" stroke-width="0.8"/></svg>
<div class="pill" style="left:213.40px;top:420.90px;width:34.4px;background:#9d9cf0"></div>
<div class="t" style="top:424.60px;font-size:9.1px;color:#14143a;font-weight:bold;left:80.60px;width:300px;text-align:center;">OToG</div>
<div class="t" style="top:423.26px;font-size:9.9px;color:#404040;right:604.60px;text-align:right;transform:scaleX(0.96);transform-origin:100% 0;-webkit-text-stroke:0.15px #3a3a3a;">20</div>
<div class="t" style="top:423.26px;font-size:9.9px;color:#404040;right:534.90px;text-align:right;transform:scaleX(0.96);transform-origin:100% 0;-webkit-text-stroke:0.15px #3a3a3a;">20</div>
<div class="t" style="top:423.26px;font-size:9.9px;color:#404040;right:360.60px;text-align:right;transform:scaleX(0.96);transform-origin:100% 0;-webkit-text-stroke:0.15px #3a3a3a;">1,000.00</div>
<div class="t" style="top:423.26px;font-size:9.9px;color:#404040;right:276.60px;text-align:right;transform:scaleX(0.96);transform-origin:100% 0;-webkit-text-stroke:0.15px #3a3a3a;">0.00</div>
<div class="t" style="top:423.26px;font-size:9.9px;color:#404040;right:193.00px;text-align:right;transform:scaleX(0.96);transform-origin:100% 0;-webkit-text-stroke:0.15px #3a3a3a;">0.00</div>
<div class="t" style="top:423.26px;font-size:9.9px;color:#404040;right:108.80px;text-align:right;transform:scaleX(0.96);transform-origin:100% 0;-webkit-text-stroke:0.15px #3a3a3a;">1,000.00</div>
<div class="t" style="top:423.26px;font-size:9.9px;color:#404040;right:18.40px;text-align:right;transform:scaleX(0.96);transform-origin:100% 0;-webkit-text-stroke:0.15px #3a3a3a;">470.00</div>
<div class="ab" style="left:24px;top:439.03px;width:996.3px;height:21.23px;background:#f4f4f4;border-top:1px solid #ebebeb"></div>
<div class="cb" style="left:29.6px;top:446.03px"></div>
<div class="t" style="top:444.37px;font-size:9.9px;color:#3a7cc0;left:-54.55px;width:300px;text-align:center;transform:scaleX(0.91);transform-origin:50% 0;-webkit-text-stroke:0.2px #3a7cc0;">201-1004</div>
<div class="t" style="top:444.37px;font-size:9.9px;color:#404040;left:22.45px;width:300px;text-align:center;transform:scaleX(0.94);transform-origin:50% 0;-webkit-text-stroke:0.15px #3a3a3a;">Plant</div>
<svg class="ab" style="left:347px;top:445.63px" width="10" height="10" viewBox="0 0 10 10"><path d="M0.8 9.2 L1.3 7.2 L7.5 1 L9 2.5 L2.8 8.7 Z M6.5 2 L8 3.5" fill="none" stroke="#d0d0d0" stroke-width="0.8"/></svg>
<div class="pill" style="left:207.60px;top:442.13px;width:46px;background:#f8f400"></div>
<div class="t" style="top:445.83px;font-size:9.1px;color:#000;font-weight:bold;left:80.60px;width:300px;text-align:center;">Medium</div>
<div class="t" style="top:444.37px;font-size:9.9px;color:#404040;right:683.20px;text-align:right;transform:scaleX(0.96);transform-origin:100% 0;-webkit-text-stroke:0.15px #3a3a3a;">196.00</div>
<div class="t" style="top:444.37px;font-size:9.9px;color:#404040;right:604.60px;text-align:right;transform:scaleX(0.96);transform-origin:100% 0;-webkit-text-stroke:0.15px #3a3a3a;">20</div>
<div class="t" style="top:444.37px;font-size:9.9px;color:#404040;right:534.90px;text-align:right;transform:scaleX(0.96);transform-origin:100% 0;-webkit-text-stroke:0.15px #3a3a3a;">20</div>
<div class="t" style="top:444.37px;font-size:9.9px;color:#404040;right:444.20px;text-align:right;transform:scaleX(0.96);transform-origin:100% 0;-webkit-text-stroke:0.15px #3a3a3a;">196.00</div>
<div class="t" style="top:444.37px;font-size:9.9px;color:#404040;right:360.60px;text-align:right;transform:scaleX(0.96);transform-origin:100% 0;-webkit-text-stroke:0.15px #3a3a3a;">174.00</div>
<div class="t" style="top:444.37px;font-size:9.9px;color:#404040;right:276.60px;text-align:right;transform:scaleX(0.96);transform-origin:100% 0;-webkit-text-stroke:0.15px #3a3a3a;">30.00</div>
<div class="t" style="top:444.37px;font-size:9.9px;color:#404040;right:193.00px;text-align:right;transform:scaleX(0.96);transform-origin:100% 0;-webkit-text-stroke:0.15px #3a3a3a;">0.00</div>
<div class="t" style="top:444.37px;font-size:9.9px;color:#404040;right:108.80px;text-align:right;transform:scaleX(0.96);transform-origin:100% 0;-webkit-text-stroke:0.15px #3a3a3a;">204.00</div>
<div class="t" style="top:444.37px;font-size:9.9px;color:#404040;right:18.40px;text-align:right;transform:scaleX(0.96);transform-origin:100% 0;-webkit-text-stroke:0.15px #3a3a3a;">400.00</div>
<div class="ab" style="left:24px;top:460.26px;width:996.3px;height:21.23px;background:#fff;border-top:1px solid #ebebeb"></div>
<div class="cb" style="left:29.6px;top:467.26px"></div>
<div class="t" style="top:465.48px;font-size:9.9px;color:#3a7cc0;left:-54.55px;width:300px;text-align:center;transform:scaleX(0.91);transform-origin:50% 0;-webkit-text-stroke:0.2px #3a7cc0;">201-1005</div>
<div class="t" style="top:465.48px;font-size:9.9px;color:#404040;left:22.45px;width:300px;text-align:center;transform:scaleX(0.94);transform-origin:50% 0;-webkit-text-stroke:0.15px #3a3a3a;">Plant</div>
<svg class="ab" style="left:347px;top:466.86px" width="10" height="10" viewBox="0 0 10 10"><path d="M0.8 9.2 L1.3 7.2 L7.5 1 L9 2.5 L2.8 8.7 Z M6.5 2 L8 3.5" fill="none" stroke="#d0d0d0" stroke-width="0.8"/></svg>
<div class="pill" style="left:207.60px;top:463.36px;width:46px;background:#f8f400"></div>
<div class="t" style="top:467.06px;font-size:9.1px;color:#000;font-weight:bold;left:80.60px;width:300px;text-align:center;">Medium</div>
<div class="t" style="top:465.48px;font-size:9.9px;color:#404040;right:683.20px;text-align:right;transform:scaleX(0.96);transform-origin:100% 0;-webkit-text-stroke:0.15px #3a3a3a;">340.00</div>
<div class="t" style="top:465.48px;font-size:9.9px;color:#404040;right:604.60px;text-align:right;transform:scaleX(0.96);transform-origin:100% 0;-webkit-text-stroke:0.15px #3a3a3a;">40</div>
<div class="t" style="top:465.48px;font-size:9.9px;color:#404040;right:534.90px;text-align:right;transform:scaleX(0.96);transform-origin:100% 0;-webkit-text-stroke:0.15px #3a3a3a;">40</div>
<div class="t" style="top:465.48px;font-size:9.9px;color:#404040;right:444.20px;text-align:right;transform:scaleX(0.96);transform-origin:100% 0;-webkit-text-stroke:0.15px #3a3a3a;">340.00</div>
<div class="t" style="top:465.48px;font-size:9.9px;color:#404040;right:360.60px;text-align:right;transform:scaleX(0.96);transform-origin:100% 0;-webkit-text-stroke:0.15px #3a3a3a;">380.00</div>
<div class="t" style="top:465.48px;font-size:9.9px;color:#404040;right:276.60px;text-align:right;transform:scaleX(0.96);transform-origin:100% 0;-webkit-text-stroke:0.15px #3a3a3a;">0.00</div>
<div class="t" style="top:465.48px;font-size:9.9px;color:#404040;right:193.00px;text-align:right;transform:scaleX(0.96);transform-origin:100% 0;-webkit-text-stroke:0.15px #3a3a3a;">0.00</div>
<div class="t" style="top:465.48px;font-size:9.9px;color:#404040;right:108.80px;text-align:right;transform:scaleX(0.96);transform-origin:100% 0;-webkit-text-stroke:0.15px #3a3a3a;">380.00</div>
<div class="t" style="top:465.48px;font-size:9.9px;color:#404040;right:18.40px;text-align:right;transform:scaleX(0.96);transform-origin:100% 0;-webkit-text-stroke:0.15px #3a3a3a;">720.00</div>
<div class="ab" style="left:24px;top:481.49px;width:996.3px;height:21.23px;background:#f4f4f4;border-top:1px solid #ebebeb"></div>
<div class="cb" style="left:29.6px;top:488.49px"></div>
<div class="t" style="top:486.59px;font-size:9.9px;color:#3a7cc0;left:-54.55px;width:300px;text-align:center;transform:scaleX(0.91);transform-origin:50% 0;-webkit-text-stroke:0.2px #3a7cc0;">201-1006</div>
<div class="t" style="top:486.59px;font-size:9.9px;color:#404040;left:22.45px;width:300px;text-align:center;transform:scaleX(0.94);transform-origin:50% 0;-webkit-text-stroke:0.15px #3a3a3a;">Plant</div>
<svg class="ab" style="left:347px;top:488.09px" width="10" height="10" viewBox="0 0 10 10"><path d="M0.8 9.2 L1.3 7.2 L7.5 1 L9 2.5 L2.8 8.7 Z M6.5 2 L8 3.5" fill="none" stroke="#d0d0d0" stroke-width="0.8"/></svg>
<div class="pill" style="left:207.60px;top:484.59px;width:46px;background:#f8f400"></div>
<div class="t" style="top:488.29px;font-size:9.1px;color:#000;font-weight:bold;left:80.60px;width:300px;text-align:center;">Medium</div>
<div class="t" style="top:486.59px;font-size:9.9px;color:#404040;right:683.20px;text-align:right;transform:scaleX(0.96);transform-origin:100% 0;-webkit-text-stroke:0.15px #3a3a3a;">104.40</div>
<div class="t" style="top:486.59px;font-size:9.9px;color:#404040;right:604.60px;text-align:right;transform:scaleX(0.96);transform-origin:100% 0;-webkit-text-stroke:0.15px #3a3a3a;">60</div>
<div class="t" style="top:486.59px;font-size:9.9px;color:#404040;right:534.90px;text-align:right;transform:scaleX(0.96);transform-origin:100% 0;-webkit-text-stroke:0.15px #3a3a3a;">60</div>
<div class="t" style="top:486.59px;font-size:9.9px;color:#404040;right:444.20px;text-align:right;transform:scaleX(0.96);transform-origin:100% 0;-webkit-text-stroke:0.15px #3a3a3a;">104.40</div>
<div class="t" style="top:486.59px;font-size:9.9px;color:#404040;right:360.60px;text-align:right;transform:scaleX(0.96);transform-origin:100% 0;-webkit-text-stroke:0.15px #3a3a3a;">302.00</div>
<div class="t" style="top:486.59px;font-size:9.9px;color:#404040;right:276.60px;text-align:right;transform:scaleX(0.96);transform-origin:100% 0;-webkit-text-stroke:0.15px #3a3a3a;">15.00</div>
<div class="t" style="top:486.59px;font-size:9.9px;color:#404040;right:193.00px;text-align:right;transform:scaleX(0.96);transform-origin:100% 0;-webkit-text-stroke:0.15px #3a3a3a;">200.00</div>
<div class="t" style="top:486.59px;font-size:9.9px;color:#404040;right:108.80px;text-align:right;transform:scaleX(0.96);transform-origin:100% 0;-webkit-text-stroke:0.15px #3a3a3a;">117.00</div>
<div class="t" style="top:486.59px;font-size:9.9px;color:#404040;right:18.40px;text-align:right;transform:scaleX(0.96);transform-origin:100% 0;-webkit-text-stroke:0.15px #3a3a3a;">221.40</div>
<div class="cl" style="left:23.5px;top:226.73px;height:21.23px"></div>
<div class="cl" style="left:23.5px;top:269.19px;height:21.23px"></div>
<div class="cl" style="left:23.5px;top:290.42px;height:21.23px"></div>
<div class="cl" style="left:23.5px;top:311.65px;height:21.23px"></div>
<div class="cl" style="left:23.5px;top:332.88px;height:21.23px"></div>
<div class="cl" style="left:23.5px;top:354.11px;height:21.23px"></div>
<div class="cl" style="left:23.5px;top:375.34px;height:21.23px"></div>
<div class="cl" style="left:23.5px;top:417.80px;height:21.23px"></div>
<div class="cl" style="left:23.5px;top:439.03px;height:21.23px"></div>
<div class="cl" style="left:23.5px;top:460.26px;height:21.23px"></div>
<div class="cl" style="left:23.5px;top:481.49px;height:21.23px"></div>
<div class="cl" style="left:44.1px;top:226.73px;height:21.23px"></div>
<div class="cl" style="left:44.1px;top:269.19px;height:21.23px"></div>
<div class="cl" style="left:44.1px;top:290.42px;height:21.23px"></div>
<div class="cl" style="left:44.1px;top:311.65px;height:21.23px"></div>
<div class="cl" style="left:44.1px;top:332.88px;height:21.23px"></div>
<div class="cl" style="left:44.1px;top:354.11px;height:21.23px"></div>
<div class="cl" style="left:44.1px;top:375.34px;height:21.23px"></div>
<div class="cl" style="left:44.1px;top:417.80px;height:21.23px"></div>
<div class="cl" style="left:44.1px;top:439.03px;height:21.23px"></div>
<div class="cl" style="left:44.1px;top:460.26px;height:21.23px"></div>
<div class="cl" style="left:44.1px;top:481.49px;height:21.23px"></div>
<div class="cl" style="left:145.8px;top:205.5px;height:297.5px"></div>
<div class="cl" style="left:198.1px;top:205.5px;height:297.5px"></div>
<div class="cl" style="left:262.1px;top:205.5px;height:297.5px"></div>
<div class="cl" style="left:362.3px;top:205.5px;height:297.5px"></div>
<div class="cl" style="left:424.5px;top:205.5px;height:297.5px"></div>
<div class="cl" style="left:494.2px;top:205.5px;height:297.5px"></div>
<div class="cl" style="left:584.9px;top:205.5px;height:297.5px"></div>
<div class="cl" style="left:668.5px;top:205.5px;height:297.5px"></div>
<div class="cl" style="left:752.5px;top:205.5px;height:297.5px"></div>
<div class="cl" style="left:836.1px;top:205.5px;height:297.5px"></div>
<div class="cl" style="left:920.3px;top:205.5px;height:297.5px"></div>
<div class="cl" style="left:1010.7px;top:205.5px;height:297.5px"></div>
<div class="ab" style="left:1011.7px;top:205.5px;width:8.2px;height:297.5px;overflow:hidden">
<div class="t" style="top:112.31px;font-size:9.9px;color:#404040;left:5.60px;transform:scaleX(0.96);transform-origin:0 0;">N</div>
<div class="t" style="top:176.00px;font-size:9.9px;color:#404040;left:5.90px;transform:scaleX(0.96);transform-origin:0 0;">E</div>
</div>
<div class="cl" style="left:23.5px;top:159.6px;height:45.900000000000006px"></div>
<div class="cl" style="left:44.1px;top:159.6px;height:45.900000000000006px"></div>
<div class="cl" style="left:145.8px;top:159.6px;height:45.900000000000006px"></div>
<div class="cl" style="left:198.1px;top:159.6px;height:45.900000000000006px"></div>
<div class="cl" style="left:262.1px;top:159.6px;height:45.900000000000006px"></div>
<div class="cl" style="left:362.3px;top:159.6px;height:45.900000000000006px"></div>
<div class="cl" style="left:424.5px;top:159.6px;height:45.900000000000006px"></div>
<div class="cl" style="left:494.2px;top:159.6px;height:45.900000000000006px"></div>
<div class="cl" style="left:584.9px;top:159.6px;height:45.900000000000006px"></div>
<div class="cl" style="left:668.5px;top:159.6px;height:45.900000000000006px"></div>
<div class="cl" style="left:752.5px;top:159.6px;height:45.900000000000006px"></div>
<div class="cl" style="left:836.1px;top:159.6px;height:45.900000000000006px"></div>
<div class="cl" style="left:920.3px;top:159.6px;height:45.900000000000006px"></div>
<div class="cl" style="left:1010.7px;top:159.6px;height:45.900000000000006px"></div>
<div class="ab" style="left:6px;top:503.0px;width:1014.3px;height:22.200000000000045px;background:#f4f4f4;border-top:1px solid #e7e7e7"></div>
<div class="cl" style="left:23.5px;top:503.0px;height:22.200000000000045px"></div>
<div class="cl" style="left:44.1px;top:503.0px;height:22.200000000000045px"></div>
<div class="cl" style="left:145.8px;top:503.0px;height:22.200000000000045px"></div>
<div class="cl" style="left:198.1px;top:503.0px;height:22.200000000000045px"></div>
<div class="cl" style="left:262.1px;top:503.0px;height:22.200000000000045px"></div>
<div class="cl" style="left:362.3px;top:503.0px;height:22.200000000000045px"></div>
<div class="cl" style="left:424.5px;top:503.0px;height:22.200000000000045px"></div>
<div class="cl" style="left:494.2px;top:503.0px;height:22.200000000000045px"></div>
<div class="cl" style="left:584.9px;top:503.0px;height:22.200000000000045px"></div>
<div class="cl" style="left:668.5px;top:503.0px;height:22.200000000000045px"></div>
<div class="cl" style="left:752.5px;top:503.0px;height:22.200000000000045px"></div>
<div class="cl" style="left:836.1px;top:503.0px;height:22.200000000000045px"></div>
<div class="cl" style="left:920.3px;top:503.0px;height:22.200000000000045px"></div>
<div class="cl" style="left:1010.7px;top:503.0px;height:22.200000000000045px"></div>
<div class="ab" style="left:6px;top:492.5px;width:140.3px;height:10.5px;background:#fff"></div>
<div class="ab" style="left:146.5px;top:495.3px;width:204px;height:6.2px;border-radius:3.1px;background:rgba(128,128,128,0.8)"></div>
<div class="ab" style="left:1012.3px;top:206px;width:6.7px;height:53px;border-radius:3.4px;background:rgba(140,140,140,0.75)"></div>
<div class="cb" style="left:29.6px;top:166.2px"></div>
<div class="t" style="top:165.50px;font-size:8.4px;color:#444;font-weight:bold;left:-58.05px;width:300px;text-align:center;transform:scaleX(0.96);transform-origin:50% 0;">Part Number</div>
<div class="keb" style="left:137.3px;top:164.1px;height:9px"><i style="top:0"></i><i style="top:3.4px"></i><i style="top:6.8px"></i></div>
<div class="t" style="top:165.50px;font-size:8.4px;color:#444;font-weight:bold;left:18.95px;width:300px;text-align:center;transform:scaleX(0.96);transform-origin:50% 0;">Loca...</div>
<div class="keb" style="left:189.6px;top:164.1px;height:9px"><i style="top:0"></i><i style="top:3.4px"></i><i style="top:6.8px"></i></div>
<div class="t" style="top:165.50px;font-size:8.4px;color:#444;font-weight:bold;left:77.10px;width:300px;text-align:center;transform:scaleX(0.96);transform-origin:50% 0;">Priority</div>
<div class="keb" style="left:253.60000000000002px;top:164.1px;height:9px"><i style="top:0"></i><i style="top:3.4px"></i><i style="top:6.8px"></i></div>
<div class="t" style="top:165.50px;font-size:8.4px;color:#444;font-weight:bold;left:159.20px;width:300px;text-align:center;transform:scaleX(0.96);transform-origin:50% 0;">Reorder Qty</div>
<div class="keb" style="left:353.8px;top:164.1px;height:9px"><i style="top:0"></i><i style="top:3.4px"></i><i style="top:6.8px"></i></div>
<div class="t" style="top:165.50px;font-size:8.4px;color:#444;font-weight:bold;left:240.40px;width:300px;text-align:center;transform:scaleX(0.96);transform-origin:50% 0;">R+ Lead</div>
<div class="t" style="top:177.50px;font-size:8.4px;color:#444;font-weight:bold;left:240.40px;width:300px;text-align:center;transform:scaleX(0.96);transform-origin:50% 0;">Time</div>
<div class="keb" style="left:416px;top:164.1px;height:9px"><i style="top:0"></i><i style="top:3.4px"></i><i style="top:6.8px"></i></div>
<div class="t" style="top:165.50px;font-size:8.4px;color:#444;font-weight:bold;left:306.35px;width:300px;text-align:center;transform:scaleX(0.96);transform-origin:50% 0;">Effective</div>
<div class="t" style="top:177.50px;font-size:8.4px;color:#444;font-weight:bold;left:306.35px;width:300px;text-align:center;transform:scaleX(0.96);transform-origin:50% 0;">Lead Time</div>
<div class="keb" style="left:485.7px;top:164.1px;height:9px"><i style="top:0"></i><i style="top:3.4px"></i><i style="top:6.8px"></i></div>
<div class="t" style="top:165.50px;font-size:8.4px;color:#444;font-weight:bold;left:386.55px;width:300px;text-align:center;transform:scaleX(0.96);transform-origin:50% 0;">Packaging</div>
<div class="t" style="top:177.50px;font-size:8.4px;color:#444;font-weight:bold;left:386.55px;width:300px;text-align:center;transform:scaleX(0.96);transform-origin:50% 0;">Quantity</div>
<div class="keb" style="left:576.4px;top:164.1px;height:9px"><i style="top:0"></i><i style="top:3.4px"></i><i style="top:6.8px"></i></div>
<div class="t" style="top:165.50px;font-size:8.4px;color:#444;font-weight:bold;left:473.70px;width:300px;text-align:center;transform:scaleX(0.96);transform-origin:50% 0;">On Hand</div>
<div class="keb" style="left:660px;top:164.1px;height:9px"><i style="top:0"></i><i style="top:3.4px"></i><i style="top:6.8px"></i></div>
<div class="t" style="top:165.50px;font-size:8.4px;color:#444;font-weight:bold;left:557.50px;width:300px;text-align:center;transform:scaleX(0.96);transform-origin:50% 0;">Supply Orders</div>
<div class="keb" style="left:744px;top:164.1px;height:9px"><i style="top:0"></i><i style="top:3.4px"></i><i style="top:6.8px"></i></div>
<div class="t" style="top:165.50px;font-size:8.4px;color:#444;font-weight:bold;left:641.30px;width:300px;text-align:center;transform:scaleX(0.96);transform-origin:50% 0;">Demand</div>
<div class="t" style="top:177.50px;font-size:8.4px;color:#444;font-weight:bold;left:641.30px;width:300px;text-align:center;transform:scaleX(0.96);transform-origin:50% 0;">Allocations</div>
<div class="keb" style="left:827.6px;top:164.1px;height:9px"><i style="top:0"></i><i style="top:3.4px"></i><i style="top:6.8px"></i></div>
<div class="t" style="top:165.50px;font-size:8.4px;color:#444;font-weight:bold;left:725.20px;width:300px;text-align:center;transform:scaleX(0.96);transform-origin:50% 0;">Net Flow</div>
<div class="keb" style="left:911.8px;top:164.1px;height:9px"><i style="top:0"></i><i style="top:3.4px"></i><i style="top:6.8px"></i></div>
<div class="t" style="top:165.50px;font-size:8.4px;color:#444;font-weight:bold;left:812.50px;width:300px;text-align:center;transform:scaleX(0.96);transform-origin:50% 0;">ToG</div>
<div class="keb" style="left:1002.2px;top:164.1px;height:9px"><i style="top:0"></i><i style="top:3.4px"></i><i style="top:6.8px"></i></div>
<svg class="ab" style="left:452px;top:189.8px" width="11.5" height="11.5" viewBox="0 0 12 12"><circle cx="6" cy="6" r="5.1" fill="none" stroke="#74a8de" stroke-width="1.2"/><path d="M4.3 4.6 Q4.4 2.9 6.1 2.9 Q7.8 2.9 7.8 4.4 Q7.8 5.4 6.6 5.9 Q6 6.2 6 7.3" fill="none" stroke="#74a8de" stroke-width="1.1" stroke-linecap="round"/><circle cx="6" cy="9" r="0.65" fill="#74a8de"/></svg>
<div class="ab" style="left:6px;top:525.2px;width:1014.3px;height:31.6px;background:#fff;border-top:1px solid #e0e0e0;border-radius:0 0 2px 2px"></div>
<div class="ab" style="left:9.3px;top:529.3px;width:100.6px;height:20.7px;border:1px solid #e6e6e6;border-radius:3px;background:#fff"></div>
<div class="cl" style="left:29.42px;top:529.3px;height:20.7px;background:#e6e6e6"></div>
<div class="cl" style="left:49.54px;top:529.3px;height:20.7px;background:#e6e6e6"></div>
<div class="cl" style="left:69.66px;top:529.3px;height:20.7px;background:#e6e6e6"></div>
<div class="cl" style="left:89.78px;top:529.3px;height:20.7px;background:#e6e6e6"></div>
<div class="ab" style="left:49.6px;top:529.3px;width:20.3px;height:20.7px;background:#3f82c6"></div>
<div class="t" style="top:535.76px;font-size:9.3px;color:#fff;left:-90.25px;width:300px;text-align:center;">1</div>
<svg class="ab" style="left:17px;top:537.5px" width="6" height="5" viewBox="0 0 6 5"><path d="M0.5 0 V5" stroke="#7aaade" stroke-width="0.9"/><path d="M5.5 0 V5 L1.5 2.5 Z" fill="#7aaade"/></svg>
<svg class="ab" style="left:37.5px;top:538px" width="4" height="4" viewBox="0 0 4 4"><path d="M3.5 0 V4 L0.5 2 Z" fill="#7aaade"/></svg>
<svg class="ab" style="left:78.3px;top:538px" width="4" height="4" viewBox="0 0 4 4"><path d="M0.5 0 V4 L3.5 2 Z" fill="#7aaade"/></svg>
<svg class="ab" style="left:97px;top:537.5px" width="6" height="5" viewBox="0 0 6 5"><path d="M5.5 0 V5" stroke="#7aaade" stroke-width="0.9"/><path d="M0.5 0 V5 L4.5 2.5 Z" fill="#7aaade"/></svg>
<div class="ab" style="left:119.6px;top:529.3px;width:44.7px;height:20.7px;border:1px solid #e6e6e6;border-radius:3px;background:#fff"></div>
<div class="t" style="top:534.61px;font-size:9.6px;color:#333;left:127.30px;">120</div>
<svg class="ab" style="left:151.5px;top:538.5px" width="5" height="4" viewBox="0 0 5 4"><path d="M0 0 H5 L2.5 4 Z" fill="#222"/></svg>
<div class="t" style="top:535.86px;font-size:9.3px;color:#aaa;left:169.00px;">items per page</div>
<div class="t" style="top:535.73px;font-size:9.55px;color:#aaa;right:15.40px;text-align:right;">1 - 63 of 63 items</div>
<div class="ab" style="left:5.5px;top:99.5px;width:1015.3px;height:457.8px;border-radius:3px;border:1px solid #aeb7d6;border-top-color:#3276b5;box-shadow:0.6px 1px 1.2px rgba(80,90,150,0.3)"></div>
</body></html>
